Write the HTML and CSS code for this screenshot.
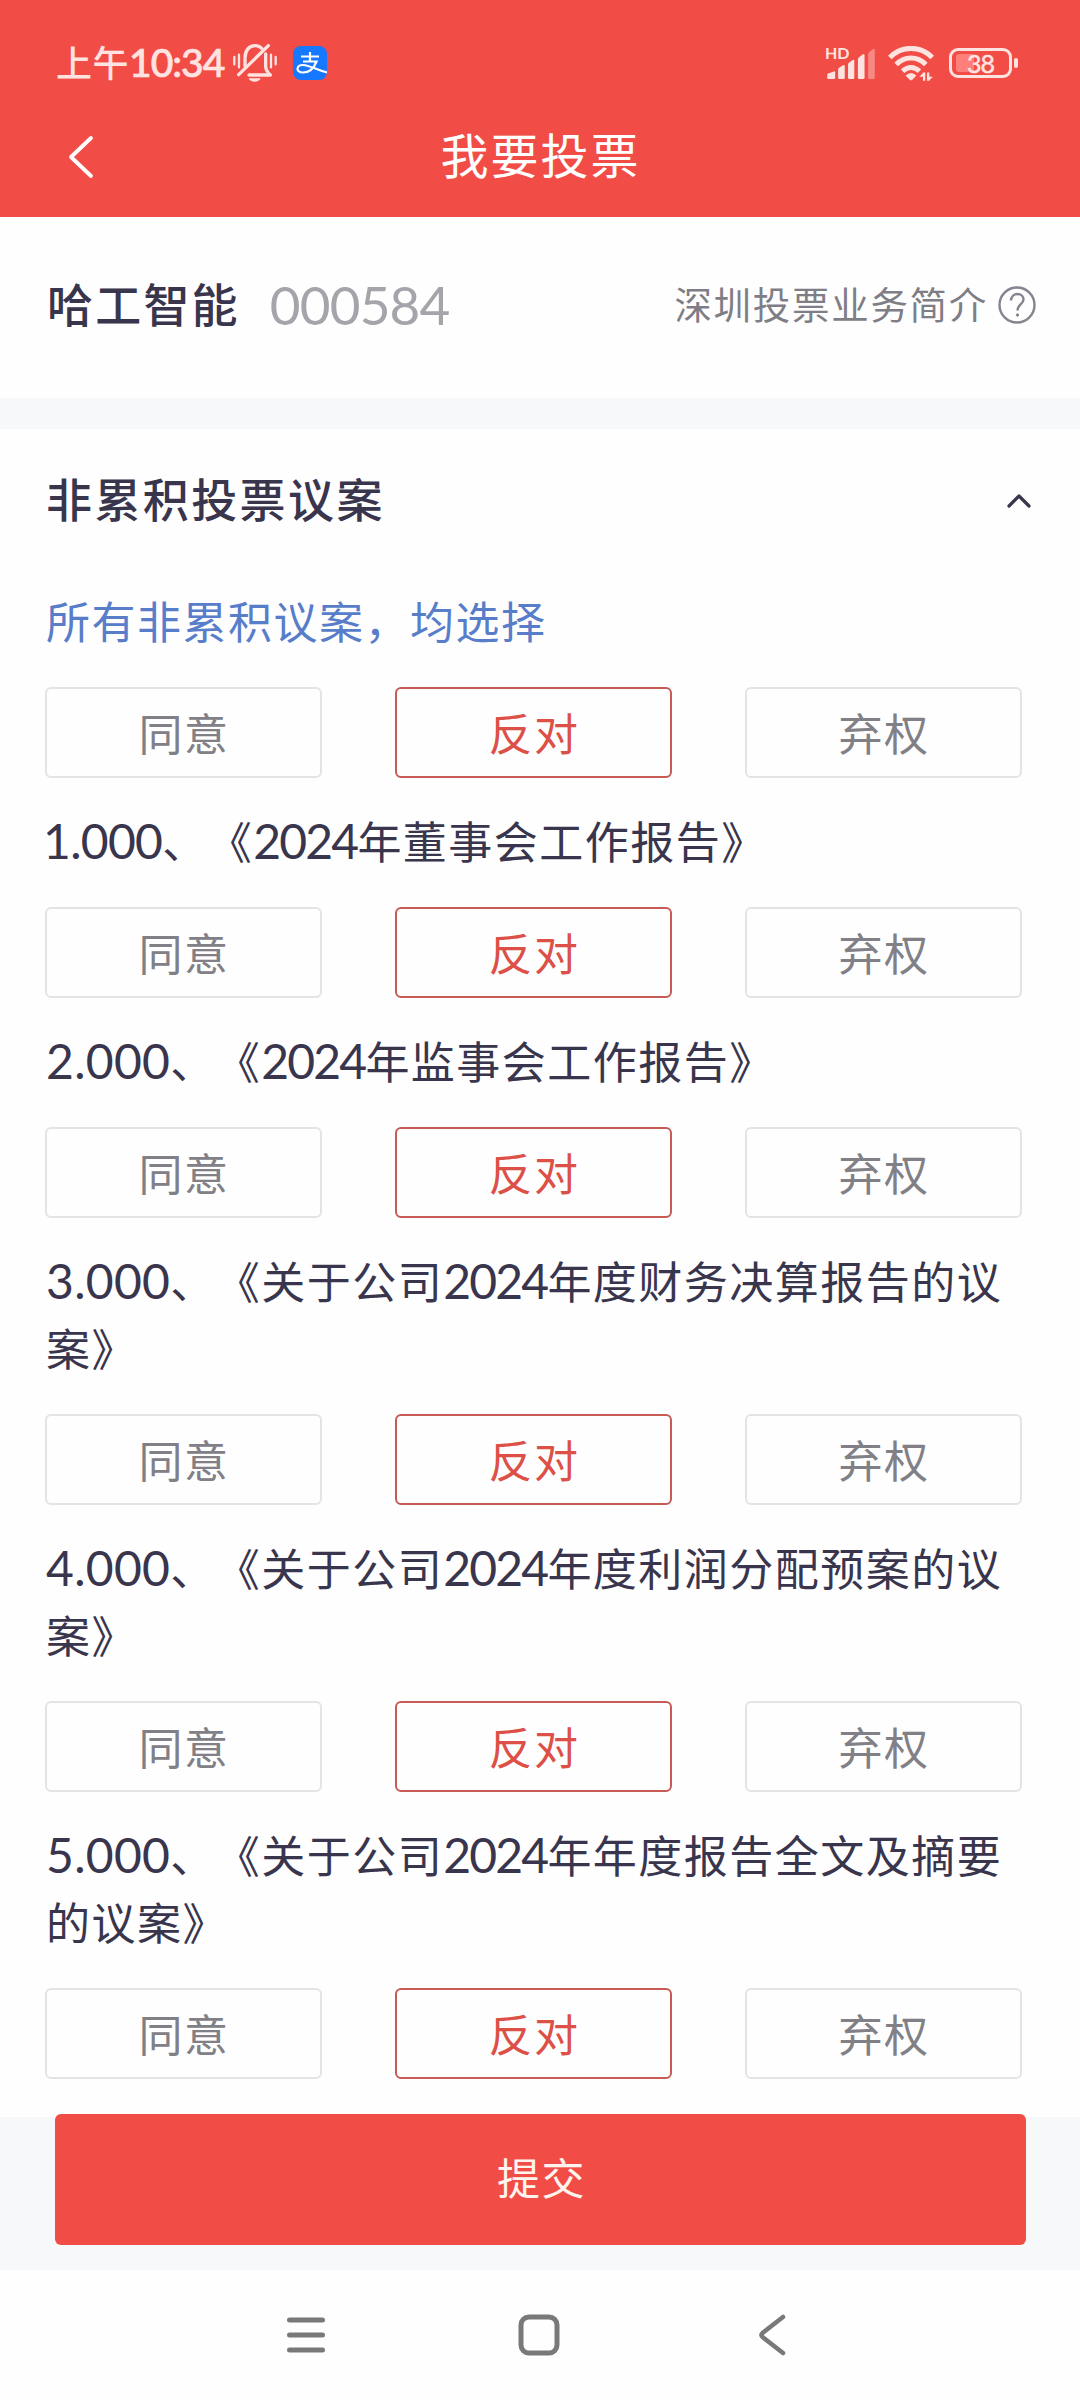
FILE: index.html
```html
<!DOCTYPE html>
<html lang="zh-CN">

<head>
    <meta charset="utf-8">
    <meta name="viewport" content="width=device-width, initial-scale=1">
    <title>我要投票</title>
    <link rel="stylesheet" href="styles.css">
</head>

<body>
    <div class="header">
        <div class="status-bar">
            <div class="status-left">
                <span class="clock">上午<span class="digits">10:34</span></span>
                <svg class="icon-mute" viewBox="0 0 132 114" fill="none" stroke="#ffe3e0" stroke-width="10" stroke-linecap="round">
                    <path d="M4 39v22M18 32v38M114 32v38M128 39v22" stroke-width="7" />
                    <path d="M36 66V42C36 18 49 5 66 5c8 0 15 3 20 8" />
                    <path d="M98 30v36c0 12 4 18 14 27H48" stroke-linejoin="round" />
                    <path d="M17 92L106 5" />
                    <path d="M47 103h36c-4 14-32 14-36 0z" fill="#ffe3e0" stroke="none" />
                </svg>
                <svg class="icon-pay" viewBox="0 0 34 34">
                    <rect width="34" height="34" rx="8" fill="#1677ff" />
                    <path d="M8 10.500h18M17 6v10M10 15.500h13.500C21 22 16 26.500 10 26.500c-8 0-6.500-8 0-7.500 7 .5 14 5 24 7.500" fill="none" stroke="#fff" stroke-width="2.200" />
                </svg>
            </div>
            <div class="status-right">
                <div class="signal">
                    <span class="hd">HD</span>
                    <svg class="icon-signal" viewBox="0 0 150 100" fill="#ffe3e0">
                        <path d="M6 84q0-3 3-4l17-6q4-1 4 2v17q0 4-4 4H10q-4 0-4-4z" />
                        <path d="M39 68q0-3 3-5l11-7q6-3 6 2v35q0 4-4 4H43q-4 0-4-4z" />
                        <path d="M69 53q0-3 3-5l10-8q6-4 6 2v51q0 4-4 4H73q-4 0-4-4z" />
                        <path d="M99 38q0-4 3-6l11-9q6-4 6 2v68q0 4-4 4h-12q-4 0-4-4z" />
                        <path d="M130 22q0-4 3-6l11-9q6-4 6 2v84q0 4-4 4h-12q-4 0-4-4z" opacity=".4" />
                    </svg>
                </div>
                <svg class="icon-wifi" viewBox="0 0 136 104" fill="none" stroke="#ffe3e0" stroke-width="15">
                    <path d="M5 34C40-2 96-2 131 34" />
                    <path d="M24 55c25-26 63-26 88 0" />
                    <path d="M43 75c15-15 35-15 50 0" />
                    <path d="M52 88q16-15 32 0L72 100q-4 3-8 0z" fill="#ffe3e0" stroke="none" />
                    <path d="M107 79v24M119 79v24" stroke-width="7" />
                    <path d="M93 91l12-12v12zM133 91l-12 12V91z" fill="#ffe3e0" stroke="none" />
                </svg>
                <div class="battery"><span class="battery-level"></span><span class="battery-text">38</span></div>
            </div>
        </div>
        <div class="title-bar">
            <svg class="icon-back" viewBox="0 0 26 44" fill="none" stroke="#fff" stroke-width="3.800" stroke-linecap="round" stroke-linejoin="round">
                <path d="M23 3L3 22l20 19" />
            </svg>
            <h1>我要投票</h1>
        </div>
    </div>

    <div class="stock">
        <span class="stock-name">哈工智能</span>
        <span class="stock-code">000584</span>
        <a class="stock-help"><span>深圳投票业务简介</span>
            <svg class="icon-help" viewBox="0 0 38 38" fill="none" stroke="#85848f" stroke-width="2.400">
                <circle cx="19" cy="19" r="17.500" />
                <path d="M13 14.500c0-4 3-6.500 6.500-6.500s6 2.500 6 5.500c0 4.500-6 5-6 11" />
                <circle cx="19.500" cy="29" r="1.200" fill="#85848f" stroke-width="1" />
            </svg>
        </a>
    </div>

    <div class="content">
        <div class="section-head">
            <h2>非累积投票议案</h2>
            <svg class="icon-up" viewBox="0 0 24 15" fill="none" stroke="#39354d" stroke-width="3.200" stroke-linecap="round" stroke-linejoin="round">
                <path d="M2 13L12 3l10 10" />
            </svg>
        </div>

        <p class="select-all">所有非累积议案，均选择</p>
        <div class="options">
            <button>同意</button>
            <button class="selected">反对</button>
            <button>弃权</button>
        </div>

        <p class="proposal"><span class="number narrow">1.000</span>、《<span class="year">2024</span>年董事会工作报告》</p>
        <div class="options">
            <button>同意</button>
            <button class="selected">反对</button>
            <button>弃权</button>
        </div>

        <p class="proposal"><span class="number">2.000</span>、《<span class="year">2024</span>年监事会工作报告》</p>
        <div class="options">
            <button>同意</button>
            <button class="selected">反对</button>
            <button>弃权</button>
        </div>

        <p class="proposal"><span class="number">3.000</span>、《关于公司<span class="year">2024</span>年度财务决算报告的议案》</p>
        <div class="options">
            <button>同意</button>
            <button class="selected">反对</button>
            <button>弃权</button>
        </div>

        <p class="proposal"><span class="number">4.000</span>、《关于公司<span class="year">2024</span>年度利润分配预案的议案》</p>
        <div class="options">
            <button>同意</button>
            <button class="selected">反对</button>
            <button>弃权</button>
        </div>

        <p class="proposal"><span class="number">5.000</span>、《关于公司<span class="year">2024</span>年年度报告全文及摘要的议案》</p>
        <div class="options">
            <button>同意</button>
            <button class="selected">反对</button>
            <button>弃权</button>
        </div>
    </div>

    <div class="footer">
        <button class="submit">提交</button>
    </div>

    <div class="nav-bar">
        <svg viewBox="0 0 44 44" fill="none" stroke="#797979" stroke-width="5" stroke-linecap="round">
            <path d="M5.500 7h33M5.500 22h33M5.500 37h33" />
        </svg>
        <svg viewBox="0 0 44 44" fill="none" stroke="#797979" stroke-width="5">
            <rect x="4" y="4" width="36" height="36" rx="8" />
        </svg>
        <svg viewBox="0 0 44 44" fill="none" stroke="#797979" stroke-width="4.500" stroke-linecap="round" stroke-linejoin="round">
            <path d="M33 4L12.500 20q-2 2 0 4L33 40" />
        </svg>
    </div>
</body>

</html>
```
FILE: styles.css
```css
* {
    box-sizing: border-box;
}

body {
    margin: 0;
    background-color: #fefefe;
    color: #39354d;
    font-family: "Noto Sans CJK SC", sans-serif;
    font-size: 44px;
    letter-spacing: 1.5px;
    text-spacing-trim: space-all;
}

h1,
h2,
p {
    margin: 0;
    font-weight: normal;
}

svg {
    display: block;
    flex: none;
}

.header {
    height: 217px;
    background-color: #f14d46;
    color: #fff;
}

.status-bar {
    display: flex;
    justify-content: space-between;
    height: 96px;
    padding: 30px 62px 0 56px;
    color: #ffe3e0;
}

.status-left,
.status-right {
    display: flex;
    align-items: center;
    height: 66px;
}

.clock {
    width: 177px;
    padding-bottom: 4px;
    font-size: 36px;
    font-weight: 500;
    line-height: 62px;
    letter-spacing: 0.5px;
    white-space: nowrap;
}

.digits {
    font-family: Lato, sans-serif;
    font-size: 39px;
    letter-spacing: -1px;
    -webkit-text-stroke: 0.7px #ffe3e0;
}

.icon-mute {
    width: 44px;
    height: 38px;
    margin-right: 16px;
}

.icon-pay {
    width: 34px;
    height: 34px;
}

.signal {
    position: relative;
    margin-right: 13px;
}

.hd {
    position: absolute;
    top: -3px;
    left: 0;
    font-family: Lato, sans-serif;
    font-size: 16px;
    font-weight: bold;
    line-height: 18px;
    letter-spacing: 0;
}

.icon-signal {
    width: 50px;
    height: 33px;
}

.icon-wifi {
    width: 46px;
    height: 35px;
    margin-right: 15px;
}

.battery {
    position: relative;
    width: 63px;
    height: 30px;
    margin-right: 6px;
    border: 3px solid #ffe3e0;
    border-radius: 9px;
}

.battery::after {
    content: "";
    position: absolute;
    top: 7px;
    right: -9px;
    width: 4px;
    height: 10px;
    border-radius: 2px;
    background-color: #ffe3e0;
}

.battery-level {
    position: absolute;
    top: 3px;
    left: 4px;
    width: 18px;
    height: 18px;
    border-radius: 3px;
    background-color: #ff7f7b;
}

.battery-text {
    position: absolute;
    top: 0;
    left: 15px;
    font-family: Lato, sans-serif;
    font-size: 25px;
    line-height: 24px;
    letter-spacing: -1px;
    -webkit-text-stroke: 0.5px #ffe3e0;
}

.title-bar {
    display: flex;
    align-items: center;
    height: 121px;
    padding: 0 68px;
}

.icon-back {
    width: 26px;
    height: 44px;
}

.title-bar h1 {
    flex: 1;
    margin-right: 25px;
    padding-bottom: 8px;
    font-size: 48px;
    line-height: 70px;
    letter-spacing: 2px;
    text-align: center;
}

.stock {
    display: flex;
    align-items: center;
    height: 181px;
    padding: 0 44px 6px 47px;
}

.stock-name {
    padding-bottom: 5px;
    font-size: 46px;
    font-weight: 500;
    letter-spacing: 2.2px;
}

.stock-code {
    margin-left: 30px;
    color: #a5a4ab;
    font-family: Lato, sans-serif;
    font-size: 53px;
    letter-spacing: -0.8px;
}

.stock-help {
    display: flex;
    align-items: center;
    margin-left: auto;
    color: #7f7e86;
    font-size: 37.5px;
    letter-spacing: 1.7px;
}

.stock-help span {
    padding-bottom: 4px;
}

.icon-help {
    width: 38px;
    height: 38px;
    margin-left: 10px;
}

.content {
    height: 1719px;
    border-top: 31px solid #f7f8fa;
    padding: 0 45px;
}

.section-head {
    display: flex;
    align-items: center;
    justify-content: space-between;
    height: 143px;
    padding: 0 4px 0 1px;
}

.section-head h2 {
    padding-bottom: 7px;
    font-size: 46px;
    font-weight: 500;
    letter-spacing: 2.4px;
}

.icon-up {
    width: 24px;
    height: 15px;
}

.select-all {
    padding: 15px 0 33px 1px;
    color: #587dc9;
    line-height: 67px;
}

.proposal {
    padding: 29px 0 33px 1px;
    line-height: 67px;
}

.number,
.year {
    font-family: Lato, sans-serif;
    font-size: 48px;
    line-height: 1;
}

.number {
    letter-spacing: 0.3px;
}

.number.narrow {
    margin-left: -3px;
    letter-spacing: -0.7px;
}

.year {
    letter-spacing: -1.8px;
}

.options {
    display: flex;
    gap: 73px;
}

.options button {
    width: 277px;
    height: 91px;
    padding: 0 0 1px 1px;
    border: 2px solid #e4e4e5;
    border-radius: 6px;
    background-color: transparent;
    color: #818087;
    font: inherit;
    line-height: 85px;
    letter-spacing: inherit;
}

.options .selected {
    border-color: #c65a54;
    color: #dc5047;
}

.footer {
    display: flow-root;
    height: 153px;
    padding: 0 54px 0 55px;
    background-color: #f7f8f9;
}

.submit {
    display: block;
    width: 100%;
    height: 131px;
    margin-top: -3px;
    padding: 0 0 7px 2px;
    border: none;
    border-radius: 6px;
    background-color: #f14d46;
    color: #fff3ee;
    font: inherit;
    font-size: 43px;
    letter-spacing: inherit;
}

.nav-bar {
    display: flex;
    justify-content: center;
    gap: 189px;
    height: 130px;
    padding: 43px 2px 0 0;
}

.nav-bar svg {
    width: 44px;
    height: 44px;
}
```
